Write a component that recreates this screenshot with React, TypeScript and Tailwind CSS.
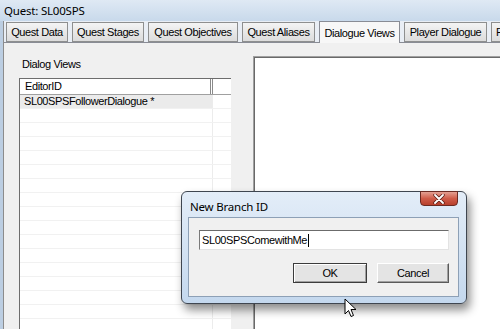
import React from "react";

const tabs = [
  { label: "Quest Data", w: "w-[62px]" },
  { label: "Quest Stages", w: "w-[72px]" },
  { label: "Quest Objectives", w: "w-[90px]" },
  { label: "Quest Aliases", w: "w-[73px]" },
  { label: "Dialogue Views", w: "w-[81px]", active: true },
  { label: "Player Dialogue", w: "w-[83px]" },
  { label: "Filter", w: "w-[40px] !justify-start pl-[4px]" },
];

const ui = "font-['Liberation_Sans',Arial,sans-serif] text-[11px] tracking-[-0.4px] text-black";
const title = "font-['Noto_Sans','Liberation_Sans',sans-serif] text-[11.5px] tracking-[-0.2px] text-black";

function Tab({ label, w, active }: { label: string; w: string; active?: boolean }) {
  if (active) {
    return (
      <div className={`${w} relative z-10 flex h-[22px] shrink-0 items-center justify-center border border-b-0 border-[#898c95] bg-[#f7f7f7] pt-[2px] ${ui}`}>
        {label}
      </div>
    );
  }
  return (
    <div className={`${w} mb-[1px] flex h-[20px] shrink-0 items-center justify-center overflow-hidden border border-[#8e8f8f] bg-gradient-to-b from-[#f4f4f4] to-[#dcdcdc] ${ui}`}>
      {label}
    </div>
  );
}

function ListView() {
  const rows = Array.from({ length: 17 });
  return (
    <div className="flex w-[212px] flex-col border-l border-t border-[#6d6d6d] bg-white">
      <div className="flex h-[16px] border-b border-[#a0a0a0]">
        <div className={`flex w-[193px] items-center border-r-[3px] border-double border-[#8a8a8a] pl-[5px] ${ui}`}>EditorID</div>
        <div className="flex-1" />
      </div>
      {rows.map((_, i) => (
        <div key={i} className="flex h-[14px] border-b border-[#f1f1f1]">
          <div className={`flex w-[193px] items-center border-r border-[#ececec] pl-[4px] ${i === 0 ? "bg-[#ebebeb]" : ""} ${ui}`}>
            {i === 0 ? "SL00SPSFollowerDialogue *" : ""}
          </div>
          <div className="flex-1" />
        </div>
      ))}
    </div>
  );
}

function CloseButton() {
  return (
    <div className="absolute left-[238px] top-[-1px] flex h-[15px] w-[38px] items-center justify-center rounded-b-[4px] border border-[#6b2a22] bg-gradient-to-b from-[#e3a093] via-[#cf5c49] to-[#b8402c]">
      <svg width="12" height="10" viewBox="0 0 12 10">
        <path d="M2 1 L10 9 M10 1 L2 9" stroke="#5a1e16" strokeWidth="3.4" strokeLinecap="round" />
        <path d="M2 1 L10 9 M10 1 L2 9" stroke="#ffffff" strokeWidth="1.8" strokeLinecap="round" />
      </svg>
    </div>
  );
}

function Dialog() {
  return (
    <div className="absolute left-[181px] top-[191px] h-[113px] w-[286px] rounded-[6px] border border-[#3f4650] bg-gradient-to-b from-[#e3edf8] to-[#c4d8ee] shadow-[3px_6px_10px_rgba(0,0,0,0.45)]">
      <CloseButton />
      <div className={`absolute left-[8px] top-[6px] ${title}`}>New Branch ID</div>
      <div className="absolute left-[6px] right-[7px] top-[25px] bottom-[6px] border border-[#8da0b6] bg-[#f0f0f0]">
        <div className="ml-[10px] mt-[12px] flex h-[20px] w-[250px] items-center border border-b-[#e3e3e3] border-l-[#7a7a7a] border-r-[#e3e3e3] border-t-[#6b6b6b] bg-white pl-[2px]">
          <span className={ui}>SL00SPSComewithMe</span>
          <span className="ml-[1px] h-[13px] w-[1px] bg-black" />
        </div>
        <div className="mr-[9px] mt-[13px] flex justify-end gap-[10px]">
          <div className={`flex h-[20px] w-[74px] items-center justify-center border border-[#3c3c3c] bg-[#e4e4e4] shadow-[inset_1px_1px_0_#ffffff,inset_-1px_-1px_0_#a0a0a0] ${ui}`}>
            OK
          </div>
          <div className={`flex h-[20px] w-[72px] items-center justify-center border border-b-[#5a5a5a] border-l-[#ffffff] border-r-[#5a5a5a] border-t-[#ffffff] bg-[#e4e4e4] shadow-[inset_-1px_-1px_0_#a0a0a0] ${ui}`}>
            Cancel
          </div>
        </div>
      </div>
    </div>
  );
}

function Cursor() {
  return (
    <svg className="absolute left-[344px] top-[298px]" width="14" height="21" viewBox="0 0 14 21">
      <path d="M1 1 L1 16 L4.5 12.5 L7 18.5 L9.5 17.5 L7 11.5 L12 11.5 Z" fill="#ffffff" stroke="#000000" strokeWidth="1" strokeLinejoin="round" />
    </svg>
  );
}

export default function App() {
  return (
    <div className="relative h-[329px] w-[500px] overflow-hidden bg-[#bfd0e3]">
      <div className={`flex h-[21px] items-center bg-gradient-to-b from-[#dfe9f4] to-[#c8d9eb] pl-[4px] ${title}`}>
        Quest: SL00SPS
      </div>
      <div className="flex h-[308px]">
        <div className="w-[3px] shrink-0 bg-[#bccee2]" />
        <div className="flex min-w-0 flex-1 flex-col border-l border-[#8c8c8c]">
          <div className="flex h-[22px] shrink-0 items-end gap-[4px] overflow-hidden bg-[#e9eef5] pl-[2px]">
            {tabs.map((t) => (
              <Tab key={t.label} {...t} />
            ))}
          </div>
          <div className="-mt-px flex min-h-0 flex-1 overflow-hidden border-t border-[#898c95] bg-[#f0f0f0]">
            <div className="ml-[15px] flex shrink-0 flex-col pt-[13px]">
              <div className={`pl-[3px] ${ui}`}>Dialog Views</div>
              <div className="mt-[5px] min-h-0 flex-1 overflow-hidden">
                <ListView />
              </div>
            </div>
            <div className="ml-[22px] mt-[13px] flex-1 border-l border-t border-[#a0a0a0] bg-white shadow-[inset_1px_1px_0_#696969]" />
          </div>
        </div>
      </div>
      <Dialog />
      <Cursor />
    </div>
  );
}
